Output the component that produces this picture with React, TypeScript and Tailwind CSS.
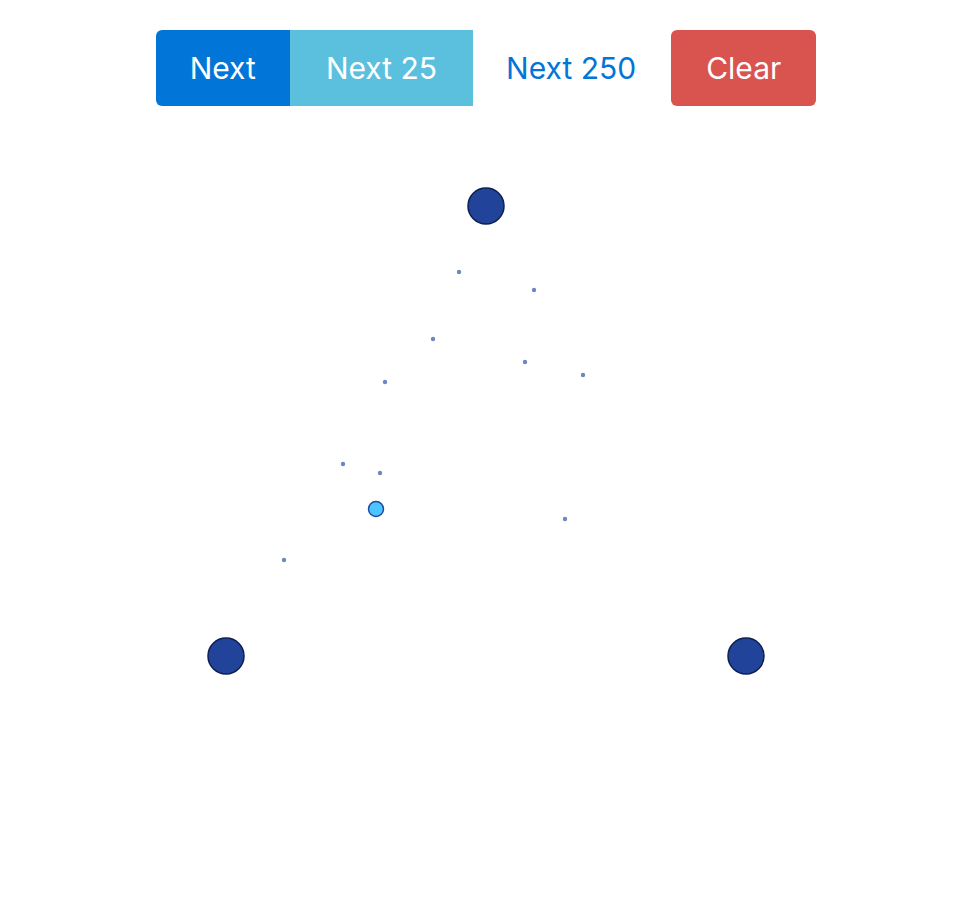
const corners = [
  { x: 486, y: 206 },
  { x: 226, y: 656 },
  { x: 746, y: 656 },
]

const points = [
  { x: 459, y: 272 },
  { x: 534, y: 290 },
  { x: 433, y: 339 },
  { x: 525, y: 362 },
  { x: 583, y: 375 },
  { x: 385, y: 382 },
  { x: 343, y: 464 },
  { x: 380, y: 473 },
  { x: 565, y: 519 },
  { x: 284, y: 560 },
]

const current = { x: 376, y: 509 }

export default function App() {
  return (
    <div className="min-h-[918px] bg-white font-['Inter','Liberation_Sans',sans-serif]">
      <div className="flex justify-center pt-[30px] pl-[10px]">
        <div className="flex">
          <button className="h-[76px] px-[34px] rounded-l-[6px] bg-[#0275d8] text-white text-[30px] leading-none">
            Next
          </button>
          <button className="h-[76px] px-[36px] bg-[#5bc0de] text-white text-[30px] leading-none">
            Next 25
          </button>
          <button className="h-[76px] px-[33px] text-[#0275d8] text-[30px] leading-none">
            Next 250
          </button>
        </div>
        <button className="ml-[2px] h-[76px] px-[35px] rounded-[6px] bg-[#d9534f] text-white text-[30px] leading-none">
          Clear
        </button>
      </div>
      <svg className="block" width="962" height="812" viewBox="0 106 962 812">
        {corners.map((c, i) => (
          <circle key={i} cx={c.x} cy={c.y} r={18} fill="#21449a" stroke="#0c1f50" strokeWidth={1.5} />
        ))}
        {points.map((p, i) => (
          <circle key={i} cx={p.x} cy={p.y} r={2.2} fill="#6b86c2" />
        ))}
        <circle cx={current.x} cy={current.y} r={7.5} fill="#4cc4ff" stroke="#1f4a9e" strokeWidth={1.5} />
      </svg>
    </div>
  )
}
